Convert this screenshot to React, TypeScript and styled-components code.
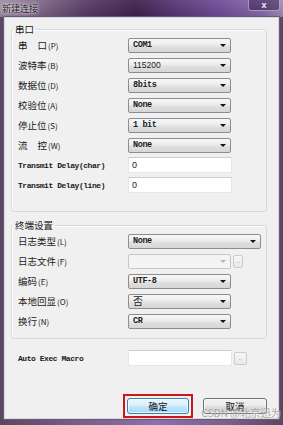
import React from "react";
import styled, { createGlobalStyle } from "styled-components";

const Global = createGlobalStyle`
  html, body { margin: 0; padding: 0; background: #ffffff; }
  * { box-sizing: border-box; }
`;

const CJK = `"Noto Sans CJK SC", "Noto Sans", sans-serif`;
const MONO = `"Liberation Mono", "DejaVu Sans Mono", monospace`;

const Window = styled.div`
  position: relative;
  width: 283px;
  height: 425px;
  display: flex;
  flex-direction: column;
  background: linear-gradient(90deg, #5a4862 0%, #76628a 30%, #8c6fac 55%, #76628a 80%, #5a4862 100%);
  overflow: hidden;
`;

const TitleBar = styled.div`
  height: 17px;
  flex: none;
  display: flex;
  align-items: flex-start;
  justify-content: space-between;
  background:
    linear-gradient(180deg, rgba(255,255,255,0.06), rgba(0,0,0,0.12)),
    linear-gradient(90deg, #a190a6 0%, #85708f 12%, #5a3d68 30%, #42224f 48%, #5a3878 62%, #734f9c 78%, #8a6bb0 92%, #a592bf 100%);
`;

const Title = styled.span`
  font-family: ${CJK};
  font-size: 9px;
  line-height: 11px;
  color: #1e1522;
  margin: 3px 0 0 2px;
  text-shadow: 0 0 4px rgba(255,255,255,0.95), 0 0 2px rgba(255,255,255,0.85);
`;

const CloseButton = styled.div`
  width: 32px;
  height: 11px;
  margin-right: 3px;
  display: flex;
  align-items: center;
  justify-content: center;
  border: 1px solid rgba(230, 220, 240, 0.55);
  border-top: none;
  border-radius: 0 0 3px 3px;
  background: linear-gradient(180deg, rgba(70,45,90,0.6), rgba(40,20,55,0.5));
  color: #f4f0f6;
  font-family: "Liberation Sans", sans-serif;
  font-size: 9px;
  font-weight: bold;
  line-height: 9px;
`;

const Client = styled.div`
  flex: 1;
  margin: 0 4px 6px 4px;
  background: #f0f0f0;
  border: 1px solid #d9d4dc;
  box-shadow: 0 0 0 1px #6b5a75;
  display: flex;
  flex-direction: column;
  padding: 0 11px 0 6px;
`;

const Group = styled.fieldset<{ $top: number; $bottom: number }>`
  margin: ${(p) => p.$top}px 0 0 0;
  padding: 0 0 ${(p) => p.$bottom}px 1px;
  border: 1px solid #d5d9dd;
  border-radius: 3px;
  box-shadow: inset 1px 1px 0 #ffffff;
  min-width: 0;
`;

const Legend = styled.legend`
  font-family: ${CJK};
  font-size: 9.5px;
  line-height: 12px;
  color: #1a1a1a;
  padding: 0 2px;
`;

const Row = styled.div<{ $indent?: number }>`
  height: 20px;
  display: grid;
  grid-template-columns: 110px auto 1fr;
  align-items: center;
  padding-left: ${(p) => p.$indent ?? 5}px;
`;

const Label = styled.span`
  font-family: ${CJK};
  font-size: 9.5px;
  color: #1a1a1a;
  white-space: nowrap;
`;

const Gap = styled.span`
  display: inline-block;
  width: 10px;
`;

const Hint = styled.span`
  font-size: 8px;
  margin-left: 1px;
`;

const LatinLabel = styled.span`
  font-family: ${MONO};
  font-size: 8px;
  font-weight: bold;
  letter-spacing: -0.45px;
  color: #1a1a1a;
  white-space: nowrap;
`;

const Combo = styled.div<{ $w?: number; $disabled?: boolean }>`
  position: relative;
  width: ${(p) => p.$w ?? 103}px;
  height: 15px;
  border: 1px solid ${(p) => (p.$disabled ? "#c5c8cb" : "#8b8d8f")};
  border-radius: 2px;
  background: ${(p) =>
    p.$disabled
      ? "#f4f4f4"
      : "linear-gradient(180deg, #f7f7f7 0%, #ededed 45%, #e0e0e0 55%, #d6d6d6 100%)"};
  display: flex;
  align-items: center;
  padding: 0 12px 0 4px;
`;

const ValueText = styled.span<{ $font?: "mono" | "sans" | "cjk" }>`
  font-family: ${(p) =>
    p.$font === "sans" ? `"Liberation Sans", sans-serif` : p.$font === "cjk" ? CJK : MONO};
  font-size: ${(p) => (p.$font === "cjk" ? "10px" : "8.5px")};
  font-weight: ${(p) => (p.$font === "mono" || !p.$font ? "bold" : "normal")};
  letter-spacing: ${(p) => (p.$font === "mono" || !p.$font ? "-0.4px" : "0")};
  color: #1c1c1c;
  line-height: 12px;
`;

const Arrow = styled.span<{ $disabled?: boolean }>`
  position: absolute;
  right: 4px;
  top: 5px;
  width: 0;
  height: 0;
  border-left: 3px solid transparent;
  border-right: 3px solid transparent;
  border-top: 3px solid ${(p) => (p.$disabled ? "#b8b8b8" : "#141414")};
`;

const TextInput = styled.div`
  width: 104px;
  height: 16px;
  background: #ffffff;
  border: 1px solid #e3e6ea;
  border-top-color: #c9ccd0;
  display: flex;
  align-items: center;
  padding-left: 3px;
  font-family: "Liberation Sans", sans-serif;
  font-size: 9px;
  color: #222;
`;

const Control = styled.div`
  display: flex;
  align-items: center;
  gap: 2px;
`;

const DotsButton = styled.div<{ $w: number; $h: number }>`
  width: ${(p) => p.$w}px;
  height: ${(p) => p.$h}px;
  border: 1px solid #c9cbce;
  border-radius: 2px;
  background: linear-gradient(180deg, #f7f7f7, #e8e8e8);
  color: #b0b0b0;
  font-family: "Liberation Sans", sans-serif;
  font-size: 7px;
  line-height: 7px;
  display: flex;
  align-items: flex-end;
  justify-content: center;
  padding-bottom: 3px;
`;

const MacroRow = styled(Row)`
  margin-top: 9px;
`;

const Buttons = styled.div`
  margin-top: 26px;
  display: flex;
  justify-content: flex-end;
  align-items: center;
  gap: 10px;
`;

const Highlight = styled.div`
  border: 2px solid #d1131b;
  padding: 2px;
  display: flex;
`;

const Button = styled.div<{ $primary?: boolean }>`
  width: ${(p) => (p.$primary ? 62 : 64)}px;
  height: 16px;
  border-radius: 3px;
  border: 1px solid ${(p) => (p.$primary ? "#3c7fb1" : "#707070")};
  background: ${(p) =>
    p.$primary
      ? "linear-gradient(180deg, #eaf6fd 0%, #d9f0fc 45%, #bee6fd 55%, #a7d9f5 100%)"
      : "linear-gradient(180deg, #f2f2f2 0%, #ebebeb 45%, #dddddd 55%, #cfcfcf 100%)"};
  box-shadow: inset 0 0 0 1px rgba(255,255,255,0.7);
  display: flex;
  align-items: center;
  justify-content: center;
  font-family: ${CJK};
  font-size: 9.5px;
  color: #111;
`;

const Watermark = styled.span`
  position: absolute;
  right: 2px;
  bottom: 5px;
  font-family: ${CJK};
  font-size: 10.5px;
  letter-spacing: -0.2px;
  color: rgba(150, 150, 150, 0.85);
  text-shadow: 0 0 1px rgba(255,255,255,0.6);
`;

type ComboProps = { value?: string; font?: "mono" | "sans" | "cjk"; w?: number; disabled?: boolean };
const ComboBox = ({ value, font, w, disabled }: ComboProps) => (
  <Combo $w={w} $disabled={disabled}>
    {value && <ValueText $font={font}>{value}</ValueText>}
    <Arrow $disabled={disabled} />
  </Combo>
);

const CnLabel = ({ text, hint }: { text: React.ReactNode; hint: string }) => (
  <Label>
    {text}
    <Hint>({hint})</Hint>
  </Label>
);

export default function App() {
  return (
    <>
      <Global />
      <Window>
        <TitleBar>
          <Title>新建连接</Title>
          <CloseButton>x</CloseButton>
        </TitleBar>
        <Client>
          <Group $top={5} $bottom={16}>
            <Legend>串口</Legend>
            <Row>
              <CnLabel text={<>串<Gap />口</>} hint="P" />
              <ComboBox value="COM1" />
            </Row>
            <Row>
              <CnLabel text="波特率" hint="B" />
              <ComboBox value="115200" font="sans" />
            </Row>
            <Row>
              <CnLabel text="数据位" hint="D" />
              <ComboBox value="8bits" />
            </Row>
            <Row>
              <CnLabel text="校验位" hint="A" />
              <ComboBox value="None" />
            </Row>
            <Row>
              <CnLabel text="停止位" hint="S" />
              <ComboBox value="1 bit" />
            </Row>
            <Row>
              <CnLabel text={<>流<Gap />控</>} hint="W" />
              <ComboBox value="None" />
            </Row>
            <Row>
              <LatinLabel>Transmit Delay(char)</LatinLabel>
              <TextInput>0</TextInput>
            </Row>
            <Row>
              <LatinLabel>Transmit Delay(line)</LatinLabel>
              <TextInput>0</TextInput>
            </Row>
          </Group>
          <Group $top={7} $bottom={7}>
            <Legend>终端设置</Legend>
            <Row>
              <CnLabel text="日志类型" hint="L" />
              <ComboBox value="None" w={133} />
            </Row>
            <Row>
              <CnLabel text="日志文件" hint="F" />
              <Control>
                <ComboBox w={103} disabled />
                <DotsButton $w={10} $h={13}>..</DotsButton>
              </Control>
            </Row>
            <Row>
              <CnLabel text="编码" hint="E" />
              <ComboBox value="UTF-8" />
            </Row>
            <Row>
              <CnLabel text="本地回显" hint="O" />
              <ComboBox value="否" font="cjk" />
            </Row>
            <Row>
              <CnLabel text="换行" hint="N" />
              <ComboBox value="CR" />
            </Row>
          </Group>
          <MacroRow $indent={7}>
            <LatinLabel>Auto Exec Macro</LatinLabel>
            <Control>
              <TextInput />
              <DotsButton $w={13} $h={13}>..</DotsButton>
            </Control>
          </MacroRow>
          <Buttons>
            <Highlight>
              <Button $primary>确定</Button>
            </Highlight>
            <Button>取消</Button>
          </Buttons>
        </Client>
        <Watermark>CSDN @北京迅为</Watermark>
      </Window>
    </>
  );
}
